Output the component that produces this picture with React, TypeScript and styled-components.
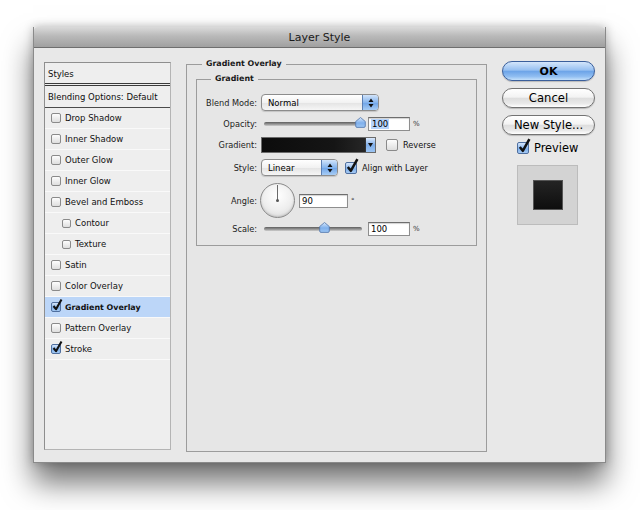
import React from 'react'
import styled, { createGlobalStyle, css } from 'styled-components'

const GlobalStyle = createGlobalStyle`
    html, body {
        margin: 0;
        background: #ffffff;
        font-family: "DejaVu Sans", "Liberation Sans", sans-serif;
        color: #111;
    }
`

const Page = styled.div`
    width: 640px;
    height: 510px;
    box-sizing: border-box;
    padding: 27px 0 0 33px;
    overflow: hidden;
`

const Dialog = styled.div`
    width: 573px;
    height: 436px;
    background: #e8e8e8;
    border: 1px solid #8a8a8a;
    border-top: none;
    box-sizing: border-box;
    box-shadow: 0 20px 28px rgba(0, 0, 0, 0.55), 0 0 9px rgba(0, 0, 0, 0.25);
    display: flex;
    flex-direction: column;
`

const TitleBar = styled.div`
    height: 20px;
    border-bottom: 1px solid #6e6e6e;
    border-radius: 4px 4px 0 0;
    background: linear-gradient(#dadada, #b9b9b9 45%, #a0a0a0);
    display: flex;
    align-items: center;
    justify-content: center;
    font-size: 11px;
    color: #1a1a1a;
`

const Body = styled.div`
    flex: 1;
    display: flex;
    align-items: flex-start;
    padding: 11px 10px 0 10px;
`

/* ---------- styles list ---------- */

const StyleList = styled.div`
    width: 127px;
    height: 388px;
    margin-top: 3px;
    box-sizing: border-box;
    background: #eeeeee;
    border: 1px solid #8e8e8e;
    border-right-color: #b4b4b4;
    border-bottom-color: #b4b4b4;
    font-size: 8.5px;
`

const ListHeader = styled.div<{ $double?: boolean }>`
    height: ${p => (p.$double ? 19 : 20)}px;
    padding: 1px 0 0 3px;
    display: flex;
    align-items: center;
    color: #0d0d0d;
    border-bottom: ${p => (p.$double ? '3px double #3a3a3a' : '1px solid #4a4a4a')};
`

const ListRow = styled.div<{ $indent?: boolean; $selected?: boolean }>`
    height: 20px;
    display: flex;
    align-items: center;
    gap: 4px;
    padding-left: ${p => (p.$indent ? 17 : 6)}px;
    border-bottom: 1px solid #f9f9f9;
    background: ${p => (p.$selected ? '#bcd6f8' : 'transparent')};
    font-weight: ${p => (p.$selected ? 'bold' : 'normal')};
    font-size: ${p => (p.$selected ? 7.9 : 8.5)}px;
`

/* ---------- checkbox ---------- */

const Box = styled.span<{ $checked?: boolean; $size: number }>`
    position: relative;
    flex: none;
    width: ${p => p.$size}px;
    height: ${p => p.$size}px;
    box-sizing: border-box;
    border: 1px solid #8a8a8a;
    border-radius: 2px;
    background: linear-gradient(#fdfdfd, #dedede);
    ${p =>
        p.$checked &&
        css`
            border-color: #4f6f9f;
            background: linear-gradient(#d6e6fb, #7fb1ec 60%, #a5c9f3);
        `}
`

const CheckMark = styled.svg`
    position: absolute;
    left: 0;
    bottom: 0;
    overflow: visible;
`

function Checkbox({ checked, size = 10 }: { checked?: boolean; size?: number }) {
    return (
        <Box $checked={checked} $size={size}>
            {checked && (
                <CheckMark width={size} height={size} viewBox="0 0 10 10">
                    <path d="M1.5 5 L4 8.2 L9.5 -1.5" fill="none" stroke="#111" strokeWidth="2.1" strokeLinejoin="round" />
                </CheckMark>
            )}
        </Box>
    )
}

/* ---------- middle group ---------- */

const Group = styled.fieldset`
    width: 301px;
    height: 393px;
    margin: 0 0 0 15px;
    padding: 0 9px;
    box-sizing: border-box;
    border: 1px solid #9c9c9c;
    min-width: 0;
    background: #e6e6e6;
`

const Legend = styled.legend<{ $inset: number }>`
    margin-left: ${p => p.$inset}px;
    padding: 0 4px;
    font-weight: bold;
    font-size: 7.9px;
    line-height: 10px;
    color: #1a1a1a;
`

const InnerGroup = styled.fieldset`
    margin: 5px 0 0 0;
    padding: 8px 0 9px 0;
    border: 1px solid #9c9c9c;
    min-width: 0;
`

const Row = styled.div<{ $h: number }>`
    height: ${p => p.$h}px;
    display: grid;
    grid-template-columns: 60px auto;
    column-gap: 4px;
    align-items: center;
    justify-content: start;
    font-size: 8.2px;
`

const Label = styled.span`
    text-align: right;
    color: #222;
`

const Controls = styled.div`
    display: flex;
    align-items: center;
`

const SelectBox = styled.div<{ $w: number }>`
    width: ${p => p.$w}px;
    height: 17px;
    box-sizing: border-box;
    border: 1px solid #8c8c8c;
    border-radius: 4px;
    background: linear-gradient(#ffffff, #f2f2f2 50%, #e3e3e3 51%, #f6f6f6);
    box-shadow: 0 1px 1px rgba(0, 0, 0, 0.15);
    display: flex;
    align-items: stretch;
    overflow: hidden;
    font-size: 8.5px;
`

const SelectText = styled.span`
    flex: 1;
    padding-left: 6px;
    display: flex;
    align-items: center;
    color: #000;
`

const Stepper = styled.span`
    width: 15px;
    border-left: 1px solid #5b7fb3;
    background: linear-gradient(#d2e4fa, #86b5ee 50%, #6da3e7 51%, #a8cdf5);
    display: flex;
    align-items: center;
    justify-content: center;
`

function Select({ value, width }: { value: string; width: number }) {
    return (
        <SelectBox $w={width}>
            <SelectText>{value}</SelectText>
            <Stepper>
                <svg width="6" height="10" viewBox="0 0 6 10">
                    <path d="M3 0.5 L5.5 4 H0.5 Z M3 9.5 L5.5 6 H0.5 Z" fill="#111" />
                </svg>
            </Stepper>
        </SelectBox>
    )
}

const Track = styled.div<{ $w: number }>`
    position: relative;
    width: ${p => p.$w}px;
    height: 4px;
    margin-left: 3px;
    border-radius: 2px;
    background: linear-gradient(#5e5e5e, #9a9a9a 60%, #cfcfcf);
`

const Thumb = styled.svg<{ $pos: number }>`
    position: absolute;
    top: -5px;
    left: ${p => p.$pos}px;
    margin-left: -5px;
`

function Slider({ pos }: { pos: number }) {
    return (
        <Track $w={98}>
            <Thumb $pos={pos} width="11" height="11" viewBox="0 0 11 11">
                <defs>
                    <linearGradient id={`tg${pos}`} x1="0" y1="0" x2="0" y2="1">
                        <stop offset="0" stopColor="#d9e9fc" />
                        <stop offset="0.55" stopColor="#7fb0ec" />
                        <stop offset="1" stopColor="#9ec6f3" />
                    </linearGradient>
                </defs>
                <path d="M5.5 0.5 L10.3 4.5 V9 Q10.3 10.4 9 10.4 H2 Q0.7 10.4 0.7 9 V4.5 Z" fill={`url(#tg${pos})`} stroke="#4f73aa" strokeWidth="0.8" />
            </Thumb>
        </Track>
    )
}

const TextInput = styled.div<{ $w: number; $gap: number }>`
    width: ${p => p.$w}px;
    height: 14px;
    margin-left: ${p => p.$gap}px;
    box-sizing: border-box;
    border: 1px solid #8e8e8e;
    border-top-color: #6e6e6e;
    background: #fff;
    box-shadow: inset 0 1px 1px rgba(0, 0, 0, 0.18);
    display: flex;
    align-items: center;
    padding-left: 2px;
    font-size: 8.5px;
    color: #000;
`

const Selected = styled.span`
    background: #b6d4fb;
    padding: 0 1px;
`

const Unit = styled.span<{ $top?: boolean }>`
    margin-left: 3px;
    font-size: 7px;
    align-self: ${p => (p.$top ? 'flex-start' : 'center')};
    margin-top: ${p => (p.$top ? 14 : 0)}px;
    color: #333;
`

const Swatch = styled.div`
    width: 115px;
    height: 16px;
    box-sizing: border-box;
    border: 1px solid #6b6b6b;
    display: flex;
`

const SwatchFill = styled.div`
    flex: 1;
    background: linear-gradient(to right, #0c0c0c, #151515 70%, #262626);
`

const SwatchArrow = styled.div`
    width: 9px;
    border-left: 1px solid #333;
    background: linear-gradient(#dbe9fb, #7eade9 50%, #9cc5f3);
    display: flex;
    align-items: center;
    justify-content: center;
`

const Spacer = styled.span<{ $w: number }>`
    flex: none;
    width: ${p => p.$w}px;
`

const OptionLabel = styled.span`
    margin-left: 5px;
    font-size: 8.2px;
    color: #111;
`

const Dial = styled.div<{ $angle: number }>`
    position: relative;
    width: 35px;
    height: 35px;
    margin-left: -1px;
    box-sizing: border-box;
    border-radius: 50%;
    border: 1px solid #8a8a8a;
    background: radial-gradient(circle at 50% 35%, #ffffff, #eeeeee 55%, #d2d2d2);
    box-shadow: inset 0 -1px 2px rgba(0, 0, 0, 0.14);
    &::before {
        content: '';
        position: absolute;
        left: 16px;
        top: 1px;
        width: 1px;
        height: 16px;
        background: #6a6a6a;
        transform-origin: 50% 100%;
        transform: rotate(${p => 90 - p.$angle}deg);
    }
    &::after {
        content: '';
        position: absolute;
        left: 15px;
        top: 15px;
        width: 3px;
        height: 3px;
        border-radius: 50%;
        background: #555;
    }
`

/* ---------- right column ---------- */

const Side = styled.div`
    width: 93px;
    margin: 2px 0 0 15px;
    display: flex;
    flex-direction: column;
    gap: 7px;
`

const Button = styled.div<{ $primary?: boolean }>`
    height: 20px;
    box-sizing: border-box;
    border-radius: 10px;
    border: 1px solid ${p => (p.$primary ? '#3b5f9b' : '#737373')};
    background: ${p =>
        p.$primary
            ? 'linear-gradient(#d4e6fb, #97c0f1 45%, #6da4e8 52%, #8fbdf1 80%, #c4e0fa)'
            : 'linear-gradient(#ffffff, #f3f3f3 45%, #dedede 52%, #e9e9e9 80%, #ffffff)'};
    box-shadow: 0 1px 1px rgba(0, 0, 0, 0.2);
    display: flex;
    align-items: center;
    justify-content: center;
    font-size: ${p => (p.$primary ? 11 : 11.6)}px;
    font-weight: ${p => (p.$primary ? 'bold' : 'normal')};
    color: #000;
`

const PreviewToggle = styled.div`
    display: flex;
    align-items: center;
    gap: 5px;
    padding-left: 15px;
    margin-top: -1px;
    font-size: 11.4px;
    color: #000;
`

const PreviewBox = styled.div`
    width: 61px;
    height: 60px;
    margin: 3px 0 0 15px;
    box-sizing: border-box;
    background: #d3d3d3;
    border: 1px solid #bcbcbc;
    display: flex;
    align-items: center;
    justify-content: center;
`

const PreviewSquare = styled.div`
    width: 30px;
    height: 30px;
    box-sizing: border-box;
    border: 1px solid #555;
    background: linear-gradient(#242424, #0e0e0e);
`

const layerStyles = [
    { name: 'Drop Shadow' },
    { name: 'Inner Shadow' },
    { name: 'Outer Glow' },
    { name: 'Inner Glow' },
    { name: 'Bevel and Emboss' },
    { name: 'Contour', indent: true },
    { name: 'Texture', indent: true },
    { name: 'Satin' },
    { name: 'Color Overlay' },
    { name: 'Gradient Overlay', checked: true, selected: true },
    { name: 'Pattern Overlay' },
    { name: 'Stroke', checked: true },
]

export default function App() {
    return (
        <Page>
            <GlobalStyle />
            <Dialog>
                <TitleBar>Layer Style</TitleBar>
                <Body>
                    <StyleList>
                        <ListHeader $double>Styles</ListHeader>
                        <ListHeader>Blending Options: Default</ListHeader>
                        {layerStyles.map(s => (
                            <ListRow key={s.name} $indent={s.indent} $selected={s.selected}>
                                <Checkbox checked={s.checked} size={s.indent ? 9 : 10} />
                                {s.name}
                            </ListRow>
                        ))}
                    </StyleList>

                    <Group>
                        <Legend $inset={6}>Gradient Overlay</Legend>
                        <InnerGroup>
                            <Legend $inset={14}>Gradient</Legend>
                            <Row $h={21}>
                                <Label>Blend Mode:</Label>
                                <Controls>
                                    <Select value="Normal" width={118} />
                                </Controls>
                            </Row>
                            <Row $h={21}>
                                <Label>Opacity:</Label>
                                <Controls>
                                    <Slider pos={96} />
                                    <TextInput $w={42} $gap={6}>
                                        <Selected>100</Selected>
                                    </TextInput>
                                    <Unit>%</Unit>
                                </Controls>
                            </Row>
                            <Row $h={22}>
                                <Label>Gradient:</Label>
                                <Controls>
                                    <Swatch>
                                        <SwatchFill />
                                        <SwatchArrow>
                                            <svg width="5" height="4" viewBox="0 0 5 4">
                                                <path d="M0 0 H5 L2.5 4 Z" fill="#111" />
                                            </svg>
                                        </SwatchArrow>
                                    </Swatch>
                                    <Spacer $w={10} />
                                    <Checkbox size={12} />
                                    <OptionLabel>Reverse</OptionLabel>
                                </Controls>
                            </Row>
                            <Row $h={23}>
                                <Label>Style:</Label>
                                <Controls>
                                    <Select value="Linear" width={77} />
                                    <Spacer $w={7} />
                                    <Checkbox checked size={12} />
                                    <OptionLabel>Align with Layer</OptionLabel>
                                </Controls>
                            </Row>
                            <Row $h={43}>
                                <Label>Angle:</Label>
                                <Controls>
                                    <Dial $angle={90} />
                                    <TextInput $w={49} $gap={4}>90</TextInput>
                                    <Unit $top>°</Unit>
                                </Controls>
                            </Row>
                            <Row $h={14}>
                                <Label>Scale:</Label>
                                <Controls>
                                    <Slider pos={60} />
                                    <TextInput $w={42} $gap={6}>100</TextInput>
                                    <Unit>%</Unit>
                                </Controls>
                            </Row>
                        </InnerGroup>
                    </Group>

                    <Side>
                        <Button $primary>OK</Button>
                        <Button>Cancel</Button>
                        <Button>New Style...</Button>
                        <PreviewToggle>
                            <Checkbox checked size={12} />
                            Preview
                        </PreviewToggle>
                        <PreviewBox>
                            <PreviewSquare />
                        </PreviewBox>
                    </Side>
                </Body>
            </Dialog>
        </Page>
    )
}
